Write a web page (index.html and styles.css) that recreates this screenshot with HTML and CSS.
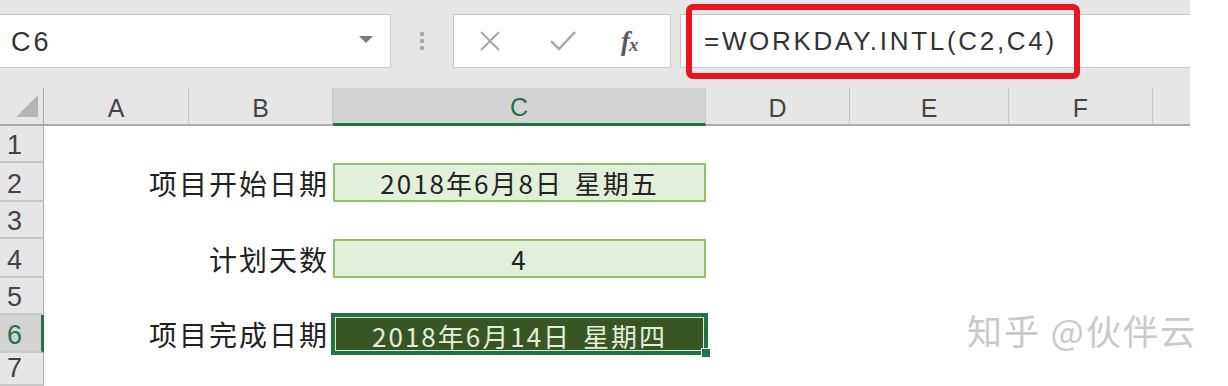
FILE: index.html
```html
<!DOCTYPE html>
<html lang="zh-CN">
<head>
<meta charset="utf-8">
<title>WORKDAY.INTL</title>
<link rel="stylesheet" href="styles.css">
</head>
<body>
<div class="app">
  <div class="toolbar">
    <div class="namebox">
      <span class="name">C6</span>
      <span class="dropdown"></span>
    </div>
    <div class="grip"><i></i><i></i><i></i></div>
    <div class="fbuttons">
      <svg class="btn-x" width="24" height="24" viewBox="0 0 24 24"><path d="M3 3 L21 21 M21 3 L3 21" stroke="#a6a6a6" stroke-width="2" fill="none"/></svg>
      <svg class="btn-ok" width="28" height="24" viewBox="0 0 28 24"><path d="M2 12 L10 20 L26 3" stroke="#a6a6a6" stroke-width="2.4" fill="none"/></svg>
      <span class="fx">f<sub>x</sub></span>
    </div>
    <div class="formula">
      <span class="ftext">=WORKDAY.INTL(C2,C4)</span>
      <div class="highlight"></div>
    </div>
  </div>
  <div class="sheet">
    <div class="corner"><span class="tri"></span></div>
    <div class="colhead">A</div>
    <div class="colhead">B</div>
    <div class="colhead sel">C</div>
    <div class="colhead">D</div>
    <div class="colhead">E</div>
    <div class="colhead">F</div>
    <div class="colhead last"></div>

    <div class="rowhead">1</div>
    <div class="cell"></div><div class="cell"></div><div class="cell"></div><div class="cell"></div><div class="cell"></div><div class="cell"></div><div class="cell"></div>

    <div class="rowhead">2</div>
    <div class="cell"></div>
    <div class="cell label">项目开始日期</div>
    <div class="cell data">2018年6月8日 星期五</div>
    <div class="cell"></div><div class="cell"></div><div class="cell"></div><div class="cell"></div>

    <div class="rowhead">3</div>
    <div class="cell"></div><div class="cell"></div><div class="cell"></div><div class="cell"></div><div class="cell"></div><div class="cell"></div><div class="cell"></div>

    <div class="rowhead">4</div>
    <div class="cell"></div>
    <div class="cell label">计划天数</div>
    <div class="cell data">4</div>
    <div class="cell"></div><div class="cell"></div><div class="cell"></div><div class="cell"></div>

    <div class="rowhead">5</div>
    <div class="cell"></div><div class="cell"></div><div class="cell"></div><div class="cell"></div><div class="cell"></div><div class="cell"></div><div class="cell"></div>

    <div class="rowhead sel">6</div>
    <div class="cell"></div>
    <div class="cell label">项目完成日期</div>
    <div class="cell active"><span class="activetext">2018年6月14日 星期四</span><span class="handle"></span></div>
    <div class="cell"></div><div class="cell"></div><div class="cell"></div><div class="cell"></div>

    <div class="rowhead">7</div>
    <div class="cell"></div><div class="cell"></div><div class="cell"></div><div class="cell"></div><div class="cell"></div><div class="cell"></div><div class="cell"></div>

    <div class="watermark">知乎 @伙伴云</div>
  </div>
</div>
</body>
</html>
```

FILE: styles.css
```css
html, body {
  margin: 0;
  padding: 0;
  background: #ffffff;
}
body {
  font-family: "Noto Sans CJK SC", "Liberation Sans", sans-serif;
  color: #262626;
}
.app {
  width: 1190px;
}
.toolbar {
  height: 88px;
  background: #e6e6e6;
  display: flex;
  align-items: flex-start;
  padding-top: 14px;
  box-sizing: border-box;
}
.namebox {
  width: 391px;
  height: 54px;
  box-sizing: border-box;
  background: #fff;
  border: 1px solid #c6c6c6;
  border-left: none;
  display: flex;
  align-items: center;
  justify-content: space-between;
  padding: 0 12px 0 11px;
}
.name {
  font-family: "Liberation Sans", sans-serif;
  font-size: 27px;
  letter-spacing: 3px;
  color: #333;
  padding-top: 2px;
}
.dropdown {
  width: 0;
  height: 0;
  border-left: 7px solid transparent;
  border-right: 7px solid transparent;
  border-top: 7px solid #7a7a7a;
  margin-right: 5px;
  margin-top: -3px;
}
.grip {
  width: 62px;
  height: 54px;
  display: flex;
  flex-direction: column;
  align-items: center;
  justify-content: center;
  gap: 3px;
}
.grip i {
  width: 4px;
  height: 4px;
  background: #a9a9a9;
  border-radius: 1px;
}
.fbuttons {
  width: 218px;
  height: 54px;
  box-sizing: border-box;
  background: #fff;
  border: 1px solid #c6c6c6;
  display: flex;
  align-items: center;
  padding-left: 24px;
}
.btn-x { margin-right: 47px; }
.btn-ok { margin-right: 44px; }
.fx {
  font-family: "Liberation Serif", serif;
  font-style: italic;
  font-weight: bold;
  font-size: 27px;
  color: #5a5a5a;
  letter-spacing: -1px;
  line-height: 1;
}
.fx sub {
  font-size: 19px;
  vertical-align: -1px;
}
.formula {
  position: relative;
  margin-left: 9px;
  flex: 1;
  height: 54px;
  box-sizing: border-box;
  background: #fff;
  border-top: 1px solid #c6c6c6;
  border-bottom: 1px solid #c6c6c6;
  border-left: 1px solid #c6c6c6;
  display: flex;
  align-items: center;
  padding-left: 23px;
}
.ftext {
  font-family: "Liberation Sans", sans-serif;
  font-size: 26px;
  letter-spacing: 2.7px;
  color: #333;
  padding-top: 1px;
}
.highlight {
  position: absolute;
  left: 5px;
  top: -11px;
  width: 394px;
  height: 75px;
  box-sizing: border-box;
  border: 6px solid #e8141f;
  border-radius: 7px;
}
.sheet {
  position: relative;
  display: grid;
  grid-template-columns: 44px 145px 144px 373px 144px 159px 144px 37px;
  grid-template-rows: 38px 37px 39px 37px 39px 37px 38px 33px;
}
.corner {
  background: #e6e6e6;
  border-right: 1px solid #ababab;
  border-bottom: 2px solid #ababab;
  position: relative;
}
.tri {
  position: absolute;
  left: 16px;
  top: 7px;
  width: 22px;
  height: 22px;
  background: #b5b5b5;
  clip-path: polygon(100% 0, 100% 100%, 0 100%);
}
.colhead {
  background: #e6e6e6;
  border-right: 1px solid #c4c4c4;
  border-bottom: 2px solid #ababab;
  font-family: "Liberation Sans", sans-serif;
  font-size: 25px;
  color: #444;
  display: flex;
  align-items: center;
  justify-content: center;
  padding-top: 4px;
  box-sizing: border-box;
}
.colhead.sel {
  background: #d3d3d3;
  border-bottom: 3px solid #217346;
  color: #217346;
}
.colhead.last {
  border-right: none;
}
.rowhead {
  background: #e6e6e6;
  border-right: 1px solid #ababab;
  border-bottom: 2px solid #c8c8c8;
  font-family: "Liberation Sans", sans-serif;
  font-size: 27px;
  color: #444;
  display: flex;
  align-items: flex-end;
  padding-left: 7px;
  line-height: 1;
  box-sizing: border-box;
  padding-bottom: 2px;
}
.rowhead.sel {
  background: #d3d3d3;
  border-right: 3px solid #217346;
  color: #217346;
}
.cell {
  background: #fff;
  min-width: 0;
}
.label {
  display: flex;
  align-items: center;
  justify-content: flex-end;
  font-size: 28px;
  letter-spacing: 2px;
  padding-right: 4px;
  color: #222;
  white-space: nowrap;
}
.data, .active {
  font-family: "Noto Sans CJK SC", sans-serif;
  font-size: 26px;
  letter-spacing: 2px;
  word-spacing: 4px;
  white-space: nowrap;
  display: flex;
  align-items: center;
  justify-content: center;
}
.data {
  background: #e2efda;
  border: 2px solid #8cc06a;
  border-radius: 1px;
  color: #222;
}
.active {
  position: relative;
  background: #375623;
  border: 2px solid #217346;
  box-shadow: inset 0 0 0 1px #dce9d2;
  outline: 2px solid #217346;
  color: #e2efda;
}
.activetext {
  padding-top: 2px;
}
.handle {
  position: absolute;
  right: -7px;
  bottom: -7px;
  width: 8px;
  height: 8px;
  background: #217346;
  border: 1px solid #fff;
}
.watermark {
  position: absolute;
  left: 967px;
  top: 216px;
  font-size: 35px;
  letter-spacing: 2px;
  color: #c9c9c9;
  white-space: nowrap;
}
```
